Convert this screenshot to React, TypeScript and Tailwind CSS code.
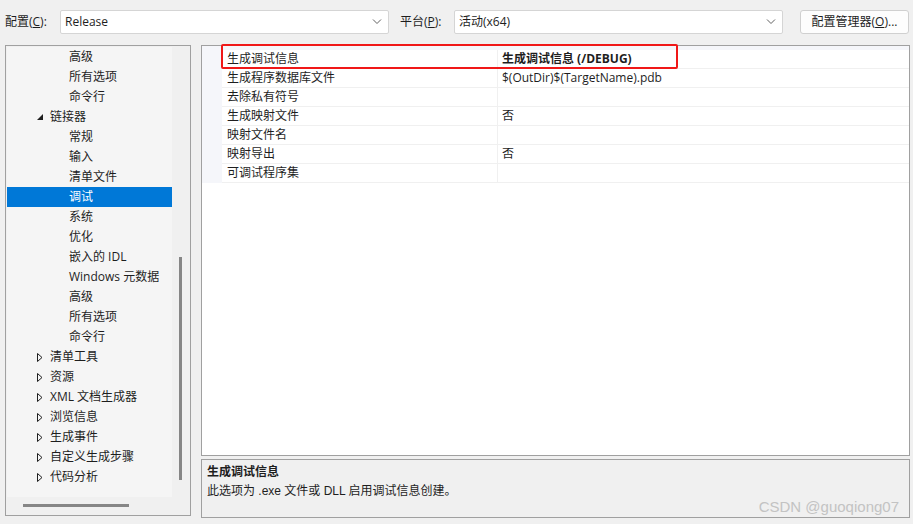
import React from "react";

type TreeItem = { label: string; level: 0 | 1; toggle?: "open" | "closed"; selected?: boolean };

const tree: TreeItem[] = [
  { label: "高级", level: 1 },
  { label: "所有选项", level: 1 },
  { label: "命令行", level: 1 },
  { label: "链接器", level: 0, toggle: "open" },
  { label: "常规", level: 1 },
  { label: "输入", level: 1 },
  { label: "清单文件", level: 1 },
  { label: "调试", level: 1, selected: true },
  { label: "系统", level: 1 },
  { label: "优化", level: 1 },
  { label: "嵌入的 IDL", level: 1 },
  { label: "Windows 元数据", level: 1 },
  { label: "高级", level: 1 },
  { label: "所有选项", level: 1 },
  { label: "命令行", level: 1 },
  { label: "清单工具", level: 0, toggle: "closed" },
  { label: "资源", level: 0, toggle: "closed" },
  { label: "XML 文档生成器", level: 0, toggle: "closed" },
  { label: "浏览信息", level: 0, toggle: "closed" },
  { label: "生成事件", level: 0, toggle: "closed" },
  { label: "自定义生成步骤", level: 0, toggle: "closed" },
  { label: "代码分析", level: 0, toggle: "closed" },
];

const props: { name: string; value: string; bold?: boolean }[] = [
  { name: "生成调试信息", value: "生成调试信息 (/DEBUG)", bold: true },
  { name: "生成程序数据库文件", value: "$(OutDir)$(TargetName).pdb" },
  { name: "去除私有符号", value: "" },
  { name: "生成映射文件", value: "否" },
  { name: "映射文件名", value: "" },
  { name: "映射导出", value: "否" },
  { name: "可调试程序集", value: "" },
];

function Chevron() {
  return (
    <svg width="10" height="6" viewBox="0 0 10 6" className="shrink-0">
      <path d="M1 0.5 L5 4.5 L9 0.5" fill="none" stroke="#606060" strokeWidth="1" />
    </svg>
  );
}

function Toggle({ kind }: { kind: "open" | "closed" }) {
  if (kind === "open") {
    return (
      <svg width="6" height="6" viewBox="0 0 6 6">
        <path d="M6 0 L6 6 L0 6 Z" fill="#1e1e1e" />
      </svg>
    );
  }
  return (
    <svg width="6" height="9" viewBox="0 0 6 9">
      <path d="M0.5 0.5 L5 4.5 L0.5 8.5 Z" fill="none" stroke="#1e1e1e" strokeWidth="1" />
    </svg>
  );
}

function Combo({ value }: { value: string }) {
  return (
    <div className="flex h-[24px] w-[329px] items-center justify-between rounded-[2px] border border-[#d5d5d5] bg-white pl-[4px] pr-[6px]">
      <span>{value}</span>
      <Chevron />
    </div>
  );
}

export default function App() {
  return (
    <div
      className="h-[524px] w-[913px] overflow-hidden bg-[#f0f0f0] text-[12px] text-[#1e1e1e]"
      style={{ fontFamily: '"Segoe UI", "Open Sans", "Noto Sans CJK SC", sans-serif' }}
    >
      {/* top bar */}
      <div className="flex h-[45px] items-center pl-[5px] pb-[1px]">
        <span className="w-[55px]">
          配置(<span className="underline">C</span>):
        </span>
        <Combo value="Release" />
        <span className="ml-[11px] w-[54px]">
          平台(<span className="underline">P</span>):
        </span>
        <Combo value="活动(x64)" />
        <button className="ml-[17px] h-[24px] w-[109px] rounded-[3px] border border-[#d0d0d0] bg-[#fdfdfd] text-[12px]">
          配置管理器(<span className="underline">O</span>)...
        </button>
      </div>

      <div className="flex gap-[10px] pl-[5px]">
        {/* left tree */}
        <div className="flex h-[471px] w-[186px] flex-col border border-[#a0a0a0] p-[1px]">
          <div className="flex h-[451px]">
            <div className="w-[165px] overflow-hidden bg-[#f5f5f5]">
              {tree.map((t, i) => (
                <div
                  key={i}
                  className={`flex h-[20px] items-center ${t.selected ? "bg-[#0078d7] text-white" : ""}`}
                >
                  {t.level === 0 ? (
                    <>
                      <span className="flex w-[43px] justify-end pr-[7px]">
                        {t.toggle && <Toggle kind={t.toggle} />}
                      </span>
                      <span>{t.label}</span>
                    </>
                  ) : (
                    <span className="pl-[62px]">{t.label}</span>
                  )}
                </div>
              ))}
            </div>
            <div className="flex w-[17px] justify-center pt-[210px]">
              <div className="h-[223px] w-[3px] bg-[#868686]" />
            </div>
          </div>
          <div className="flex h-[17px] items-center pl-[16px]">
            <div className="h-[3px] w-[106px] bg-[#868686]" />
          </div>
        </div>

        {/* right side */}
        <div className="flex w-[709px] flex-col gap-[3px]">
          <div className="relative h-[411px] border border-[#a0a0a0] bg-white">
            <div className="bg-[#f5f6fa] pt-[4px]">
              {props.map((p, i) => (
                <div key={i} className="ml-[20px] flex h-[19px] border-b border-[#f0f0f0] bg-white">
                  <div className="flex w-[276px] items-center border-r border-[#f0f0f0] pl-[5px]">{p.name}</div>
                  <div className={`flex items-center pl-[4px] ${p.bold ? "font-bold" : ""}`}>{p.value}</div>
                </div>
              ))}
            </div>
            <div className="absolute left-[19px] top-[-2px] h-[25px] w-[457px] rounded-[2px] border-2 border-[#f01818]" />
          </div>

          <div
            className="h-[59px] border border-[#a0a0a0] bg-[#f0f0f0] pl-[5px] pt-[3px]"
            style={{ fontFamily: '"Liberation Sans Narrow", "Liberation Sans", "Noto Sans CJK SC", sans-serif' }}
          >
            <div className="font-bold leading-[19px]">生成调试信息</div>
            <div className="leading-[19px]">此选项为 .exe 文件或 DLL 启用调试信息创建。</div>
            <div className="pr-[10px] text-right text-[15px] leading-[12px] text-[#c3c3c3]">CSDN @guoqiong07</div>
          </div>
        </div>
      </div>
    </div>
  );
}
